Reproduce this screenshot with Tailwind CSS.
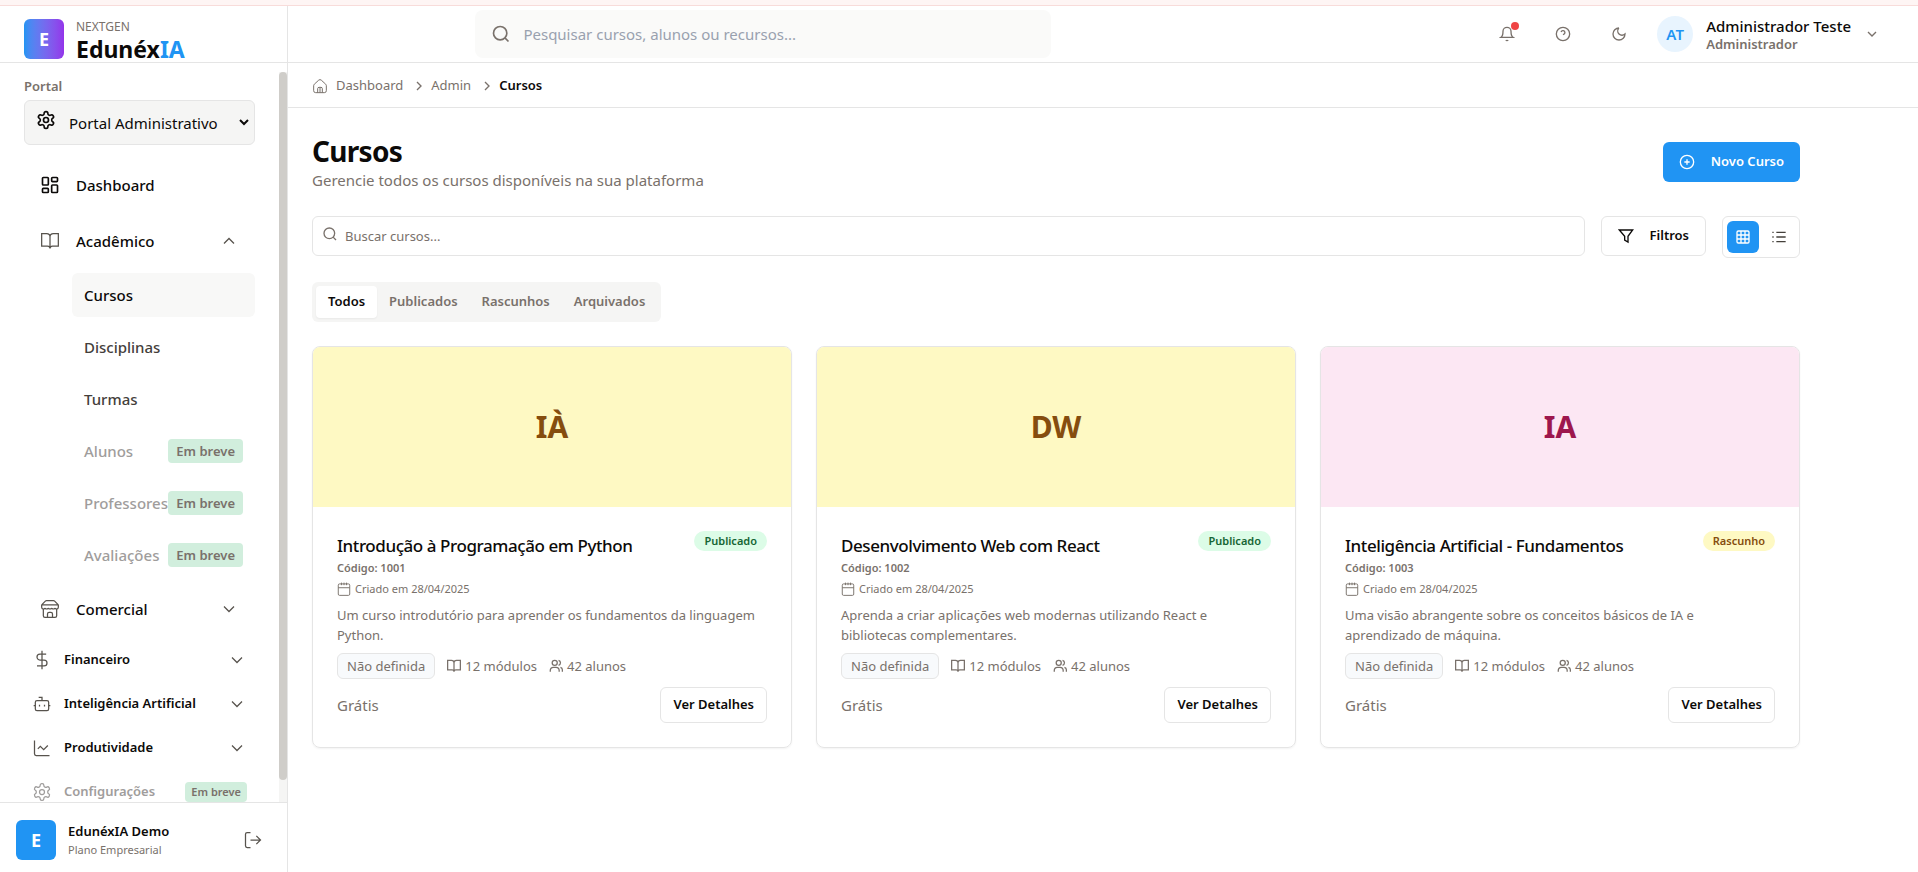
<!DOCTYPE html>
<html lang="pt-BR">
<head>
<meta charset="utf-8">
<meta name="viewport" content="width=device-width, initial-scale=1">
<title>Cursos - EdunéxIA</title>
<script src="https://cdn.jsdelivr.net/npm/@tailwindcss/browser@4"></script>
</head>
<body class="flex h-screen flex-col overflow-hidden bg-white font-['Noto_Sans','Open_Sans',sans-serif] text-stone-950">
<svg class="hidden" aria-hidden="true">
  <symbol id="gear" viewBox="0 0 24 24"><path d="M12.22 2h-.44a2 2 0 0 0-2 2v.18a2 2 0 0 1-1 1.73l-.43.25a2 2 0 0 1-2 0l-.15-.08a2 2 0 0 0-2.73.73l-.22.38a2 2 0 0 0 .73 2.73l.15.1a2 2 0 0 1 1 1.72v.51a2 2 0 0 1-1 1.74l-.15.09a2 2 0 0 0-.73 2.73l.22.38a2 2 0 0 0 2.73.73l.15-.08a2 2 0 0 1 2 0l.43.25a2 2 0 0 1 1 1.73V20a2 2 0 0 0 2 2h.44a2 2 0 0 0 2-2v-.18a2 2 0 0 1 1-1.73l.43-.25a2 2 0 0 1 2 0l.15.08a2 2 0 0 0 2.73-.73l.22-.39a2 2 0 0 0-.73-2.73l-.15-.08a2 2 0 0 1-1-1.74v-.5a2 2 0 0 1 1-1.74l.15-.09a2 2 0 0 0 .73-2.73l-.22-.38a2 2 0 0 0-2.73-.73l-.15.08a2 2 0 0 1-2 0l-.43-.25a2 2 0 0 1-1-1.73V4a2 2 0 0 0-2-2z"/><circle cx="12" cy="12" r="3"/></symbol>
  <symbol id="dash" viewBox="0 0 24 24"><rect x="3" y="3" width="7" height="9" rx="1"/><rect x="14" y="3" width="7" height="5" rx="1"/><rect x="14" y="12" width="7" height="9" rx="1"/><rect x="3" y="16" width="7" height="5" rx="1"/></symbol>
  <symbol id="book" viewBox="0 0 24 24"><path d="M2 3h6a4 4 0 0 1 4 4v14a3 3 0 0 0-3-3H2zM22 3h-6a4 4 0 0 0-4 4v14a3 3 0 0 1 3-3h7z"/></symbol>
  <symbol id="book-sm" viewBox="1 1 22 22"><path d="M2 3h6a4 4 0 0 1 4 4v14a3 3 0 0 0-3-3H2zM22 3h-6a4 4 0 0 0-4 4v14a3 3 0 0 1 3-3h7z"/></symbol>
  <symbol id="store" viewBox="0 0 24 24"><path d="m2 7 4.41-4.41A2 2 0 0 1 7.83 2h8.34a2 2 0 0 1 1.42.59L22 7M4 12v8a2 2 0 0 0 2 2h12a2 2 0 0 0 2-2v-8M15 22v-4a2 2 0 0 0-2-2h-2a2 2 0 0 0-2 2v4M2 7h20M22 7v3a2 2 0 0 1-2 2 2.7 2.7 0 0 1-1.59-.63.7.7 0 0 0-.82 0A2.7 2.7 0 0 1 16 12a2.7 2.7 0 0 1-1.59-.63.7.7 0 0 0-.82 0A2.7 2.7 0 0 1 12 12a2.7 2.7 0 0 1-1.59-.63.7.7 0 0 0-.82 0A2.7 2.7 0 0 1 8 12a2.7 2.7 0 0 1-1.59-.63.7.7 0 0 0-.82 0A2.7 2.7 0 0 1 4 12a2 2 0 0 1-2-2V7"/></symbol>
  <symbol id="dollar" viewBox="0 0 24 24"><path d="M12 1v22M17 5H9.5a3.5 3.5 0 0 0 0 7h5a3.5 3.5 0 0 1 0 7H6"/></symbol>
  <symbol id="bot" viewBox="0 0 24 24"><path d="M12 8V4H8M2 14h2M20 14h2M15 13v2M9 13v2"/><rect x="4" y="8" width="16" height="12" rx="2"/></symbol>
  <symbol id="chart" viewBox="0 0 24 24"><path d="M3 3v16a2 2 0 0 0 2 2h16M19 9l-5 5-4-4-3 3"/></symbol>
  <symbol id="down" viewBox="0 0 24 24"><path d="m6 9 6 6 6-6"/></symbol>
  <symbol id="up" viewBox="0 0 24 24"><path d="m18 15-6-6-6 6"/></symbol>
  <symbol id="right" viewBox="0 0 24 24"><path d="m9 18 6-6-6-6"/></symbol>
  <symbol id="logout" viewBox="0 0 24 24"><path d="M9 3H5a2 2 0 0 0-2 2v14a2 2 0 0 0 2 2h4M16 17l5-5-5-5M21 12H9"/></symbol>
  <symbol id="search" viewBox="0 0 24 24"><circle cx="11" cy="11" r="8"/><path d="m21 21-4.3-4.3"/></symbol>
  <symbol id="home" viewBox="0 0 24 24"><path d="M2.500 11.500a3 3 0 0 1 1-2.200l6.500-6a3 3 0 0 1 4 0l6.500 6a3 3 0 0 1 1 2.200V19a3 3 0 0 1-3 3h-13a3 3 0 0 1-3-3zM8.500 22v-6a2 2 0 0 1 2-2h3a2 2 0 0 1 2 2v6M12 14v8"/></symbol>
  <symbol id="bell" viewBox="0 0 24 24"><path d="M6 8a6 6 0 0 1 12 0c0 7 3 9 3 9H3s3-2 3-9M10.300 21a1.940 1.940 0 0 0 3.400 0"/></symbol>
  <symbol id="help" viewBox="0 0 24 24"><circle cx="12" cy="12" r="10"/><path d="M9.090 9a3 3 0 0 1 5.830 1c0 2-3 3-3 3M12 17h.01"/></symbol>
  <symbol id="moon" viewBox="0 0 24 24"><path d="M12 3a6 6 0 0 0 9 9 9 9 0 1 1-9-9"/></symbol>
  <symbol id="plus" viewBox="0 0 24 24"><circle cx="12" cy="12" r="10"/><path d="M8 12h8M12 8v8"/></symbol>
  <symbol id="filter" viewBox="0 0 24 24"><path d="M2 3h20l-7 9.500V21l-5-3v-5.500z"/></symbol>
  <symbol id="grid" viewBox="0 0 24 24"><rect x="3" y="3" width="18" height="18" rx="2"/><path d="M3 9h18M3 15h18M9 3v18M15 3v18"/></symbol>
  <symbol id="list" viewBox="0 0 24 24"><path d="M8 5h14M8 12h14M8 19h14M2 5h2M2 12h2M2 19h2"/></symbol>
  <symbol id="cal" viewBox="1 1 22 22"><rect x="3" y="4" width="18" height="18" rx="2"/><path d="M16 2v4M8 2v4M12 2v4M3 10h18"/></symbol>
  <symbol id="users" viewBox="1 1 22 22"><circle cx="10" cy="7" r="4"/><path d="M3 21v-2a5 5 0 0 1 5-5h4a5 5 0 0 1 5 5v2M22 21v-3a4 4 0 0 0-3-3.870M16 3.130a4 4 0 0 1 0 7.750"/></symbol>
</svg>

<div class="h-1.5 shrink-0 border-b border-[#f8dcda] bg-[#fef5f4]"></div>
<div class="flex min-h-0 flex-1">

  <aside class="flex w-72 shrink-0 flex-col border-r border-neutral-200">
    <div class="flex h-[57px] shrink-0 items-start gap-3 border-b border-neutral-200 px-6 pt-[13px]">
      <div class="flex size-10 shrink-0 items-center justify-center rounded-md bg-linear-to-r from-[#2094f3] to-[#9333ea] text-lg font-bold text-white">E</div>
      <div class="h-10">
        <div class="text-xs leading-4 text-stone-500">NEXTGEN</div>
        <div class="text-[23px] leading-7 font-bold">Edunéx<span class="text-[#2094f3]">IA</span></div>
      </div>
    </div>

    <div class="flex min-h-0 flex-1 overflow-hidden">
      <nav class="flex min-w-0 flex-1 flex-col px-6 pt-3">
        <label for="portal" class="text-[13px] leading-[22px] font-semibold text-stone-500">Portal</label>
        <div class="relative mt-[3px]">
          <svg class="pointer-events-none absolute top-2.5 left-3 size-5 fill-none stroke-current stroke-2"><use href="#gear"/></svg>
          <select id="portal" class="h-[45px] w-full appearance-none rounded-md border border-neutral-200 bg-stone-100 pt-0.5 pr-8 pl-11 text-[15px]">
            <option>Portal Administrativo</option>
          </select>
          <svg class="pointer-events-none absolute top-3.5 right-[3px] size-4 fill-none stroke-current stroke-3"><use href="#down"/></svg>
        </div>

        <div class="mt-4 flex shrink-0 flex-col gap-2">
          <a href="#" class="flex h-12 items-center gap-4 px-4 text-[15px] font-medium"><svg class="size-5 fill-none stroke-current stroke-2"><use href="#dash"/></svg>Dashboard</a>
          <button class="flex h-12 items-center gap-4 px-4 text-left text-[15px] font-medium"><svg class="size-5 fill-none stroke-stone-600 stroke-[1.5]"><use href="#book"/></svg><span class="flex-1">Acadêmico</span><svg class="size-5 fill-none stroke-stone-600 stroke-[1.5]"><use href="#up"/></svg></button>
          <div class="ml-12 flex flex-col gap-2 text-[15px] font-medium">
            <a href="#" class="flex h-11 items-center rounded-md bg-[#f8f8f7] px-3">Cursos</a>
            <a href="#" class="flex h-11 items-center px-3 text-stone-700">Disciplinas</a>
            <a href="#" class="flex h-11 items-center px-3 text-stone-700">Turmas</a>
            <a href="#" class="flex h-11 items-center justify-between px-3 text-[#9f9d9c]">Alunos<span class="rounded-sm bg-[#d1eedd] px-2 text-[13px] leading-6 font-semibold whitespace-nowrap text-stone-500">Em breve</span></a>
            <a href="#" class="flex h-11 items-center justify-between px-3 text-[#9f9d9c]">Professores<span class="rounded-sm bg-[#d1eedd] px-2 text-[13px] leading-6 font-semibold whitespace-nowrap text-stone-500">Em breve</span></a>
            <a href="#" class="flex h-11 items-center justify-between px-3 text-[#9f9d9c]">Avaliações<span class="rounded-sm bg-[#d1eedd] px-2 text-[13px] leading-6 font-semibold whitespace-nowrap text-stone-500">Em breve</span></a>
          </div>
          <button class="flex h-12 items-center gap-4 px-4 text-left text-[15px] font-medium"><svg class="size-5 fill-none stroke-stone-600 stroke-[1.5]"><use href="#store"/></svg><span class="flex-1">Comercial</span><svg class="size-5 fill-none stroke-stone-600 stroke-[1.5]"><use href="#down"/></svg></button>
        </div>
        <div class="mt-[5px] flex shrink-0 flex-col text-[13px] font-semibold">
          <button class="flex h-11 items-center gap-3 px-2 text-left"><svg class="size-5 fill-none stroke-stone-600 stroke-[1.5]"><use href="#dollar"/></svg><span class="flex-1">Financeiro</span><svg class="size-5 fill-none stroke-stone-600 stroke-[1.5]"><use href="#down"/></svg></button>
          <button class="flex h-11 items-center gap-3 px-2 text-left"><svg class="size-5 fill-none stroke-stone-600 stroke-[1.5]"><use href="#bot"/></svg><span class="flex-1">Inteligência Artificial</span><svg class="size-5 fill-none stroke-stone-600 stroke-[1.5]"><use href="#down"/></svg></button>
          <button class="flex h-11 items-center gap-3 px-2 text-left"><svg class="size-5 fill-none stroke-stone-600 stroke-[1.5]"><use href="#chart"/></svg><span class="flex-1">Produtividade</span><svg class="size-5 fill-none stroke-stone-600 stroke-[1.5]"><use href="#down"/></svg></button>
          <a href="#" class="flex h-11 items-center gap-3 px-2 text-[#9f9d9c]"><svg class="size-5 fill-none stroke-[#9f9d9c] stroke-[1.5]"><use href="#gear"/></svg><span class="flex-1">Configurações</span><span class="rounded-sm bg-[#d1eedd] px-1.5 text-[11px] leading-5 whitespace-nowrap text-stone-500">Em breve</span></a>
        </div>
      </nav>
      <div class="mt-[9px] w-2 shrink-0 bg-stone-100"><div class="h-[97%] rounded-full bg-[#cfcdc9]"></div></div>
    </div>

    <div class="flex h-[70px] shrink-0 items-center gap-3 border-t border-neutral-200 px-4 pt-1">
      <div class="flex size-10 items-center justify-center rounded-md bg-[#2094f3] text-lg font-bold text-white">E</div>
      <div class="flex-1">
        <div class="text-[13px] leading-5 font-semibold">EdunéxIA Demo</div>
        <div class="text-[11px] leading-[18px] text-stone-500">Plano Empresarial</div>
      </div>
      <button aria-label="Sair" class="flex size-9 items-center justify-center"><svg class="size-5 fill-none stroke-stone-600 stroke-[1.5]"><use href="#logout"/></svg></button>
    </div>
  </aside>

  <div class="flex min-w-0 flex-1 flex-col">
    <header class="flex h-[57px] shrink-0 items-center border-b border-neutral-200 px-6">
      <div class="flex-[3]"></div>
      <div class="flex h-12 w-xl items-center gap-3 rounded-lg bg-[#fafaf9] px-4">
        <svg class="size-5 fill-none stroke-stone-500 stroke-2"><use href="#search"/></svg>
        <input type="search" aria-label="Pesquisar" placeholder="Pesquisar cursos, alunos ou recursos..." class="flex-1 bg-transparent text-[15px] outline-none placeholder:text-gray-400">
      </div>
      <div class="flex-[8]"></div>
      <div class="flex items-center gap-4 text-stone-500">
        <button aria-label="Notificações" class="relative flex size-10 items-center justify-center"><svg class="size-4 fill-none stroke-current stroke-2"><use href="#bell"/></svg><span class="absolute top-2 right-2 size-2 rounded-full bg-[#ef4444]"></span></button>
        <button aria-label="Ajuda" class="flex size-10 items-center justify-center"><svg class="size-4 fill-none stroke-current stroke-2"><use href="#help"/></svg></button>
        <button aria-label="Tema" class="flex size-10 items-center justify-center"><svg class="size-4 fill-none stroke-current stroke-2"><use href="#moon"/></svg></button>
        <button class="flex items-center gap-[13px] pr-3.5 pl-0.5 text-left">
          <span class="flex size-9 items-center justify-center rounded-full bg-[#e8f4fe] text-[15px] font-semibold text-[#2094f3]">AT</span>
          <span><span class="block text-[15px] leading-5 font-medium text-stone-950">Administrador Teste</span><span class="block text-[13px] leading-4 font-semibold">Administrador</span></span>
          <svg class="size-4 fill-none stroke-current stroke-2"><use href="#down"/></svg>
        </button>
      </div>
    </header>

    <nav aria-label="Trilha" class="flex h-[45px] shrink-0 items-center border-b border-neutral-200 px-6 pt-0.5 text-[13px] text-stone-500">
      <svg class="mr-2 size-4 fill-none stroke-current stroke-[1.5]"><use href="#home"/></svg>
      <a href="#">Dashboard</a>
      <svg class="mr-1 ml-2 size-4 fill-none stroke-current stroke-2"><use href="#right"/></svg>
      <a href="#">Admin</a>
      <svg class="mr-1 ml-2 size-4 fill-none stroke-current stroke-2"><use href="#right"/></svg>
      <span class="font-semibold text-stone-950">Cursos</span>
    </nav>

    <main class="flex w-full max-w-[1536px] flex-col gap-6 p-6">
      <div class="flex items-center justify-between">
        <div class="pb-0.5">
          <h1 class="text-[28px] leading-[38px] font-bold tracking-tight">Cursos</h1>
          <p class="text-[15px] leading-5 text-stone-500">Gerencie todos os cursos disponíveis na sua plataforma</p>
        </div>
        <button class="flex h-10 items-center gap-4 rounded-md bg-[#2094f3] px-4 text-[13px] font-semibold text-white"><svg class="size-4 fill-none stroke-current stroke-2"><use href="#plus"/></svg>Novo Curso</button>
      </div>

      <div class="flex items-start gap-4">
        <div class="relative flex-1">
          <svg class="absolute top-2.5 left-2.5 size-4 fill-none stroke-stone-500 stroke-2"><use href="#search"/></svg>
          <input type="search" aria-label="Buscar cursos" placeholder="Buscar cursos..." class="block h-10 w-full rounded-md border border-neutral-200 pr-3 pl-8 text-[13px] placeholder:text-stone-500">
        </div>
        <button class="flex h-10 items-center gap-4 rounded-md border border-neutral-200 px-4 text-[13px] font-semibold"><svg class="size-4 fill-none stroke-current stroke-2"><use href="#filter"/></svg>Filtros</button>
        <div class="flex gap-1 rounded-md border border-neutral-200 p-1">
          <button aria-label="Grade" class="flex size-8 items-center justify-center rounded-md bg-[#2094f3] text-white"><svg class="size-4 fill-none stroke-current stroke-2"><use href="#grid"/></svg></button>
          <button aria-label="Lista" class="flex size-8 items-center justify-center text-stone-700"><svg class="size-4 fill-none stroke-current stroke-2"><use href="#list"/></svg></button>
        </div>
      </div>

      <div role="tablist" class="flex h-10 self-start rounded-md bg-stone-100 p-1 text-[13px] font-semibold text-stone-500">
        <button role="tab" aria-selected="true" class="rounded-sm bg-white px-3 text-stone-950 shadow-xs">Todos</button>
        <button role="tab" class="px-3">Publicados</button>
        <button role="tab" class="px-3">Rascunhos</button>
        <button role="tab" class="px-3">Arquivados</button>
      </div>

      <div class="grid grid-cols-3 gap-6">
        <article class="overflow-hidden rounded-lg border border-neutral-200 shadow-xs">
          <div class="flex h-40 items-center justify-center bg-[#fef9c3] text-3xl font-bold text-[#854d0e]">IÀ</div>
          <div class="p-6">
            <div class="flex items-start justify-between">
              <h2 class="text-[17px] leading-[30px] font-medium tracking-tight">Introdução à Programação em Python</h2>
              <span class="rounded-full bg-[#dcfce7] px-2.5 text-[11px] leading-5 font-semibold text-[#166534]">Publicado</span>
            </div>
            <p class="text-[11px] leading-[14px] font-semibold text-stone-500">Código: 1001</p>
            <p class="mt-1.5 flex items-center gap-1 text-[11px] leading-4 text-stone-500"><svg class="size-3.5 fill-none stroke-current stroke-[1.5]"><use href="#cal"/></svg>Criado em 28/04/2025</p>
            <p class="mt-2 h-10 pr-2 text-[13px] leading-5 text-stone-500">Um curso introdutório para aprender os fundamentos da linguagem Python.</p>
            <div class="mt-2 flex items-center gap-3 text-[13px] leading-6 text-stone-500">
              <span class="rounded-md border border-neutral-200 bg-slate-50 px-[9px]">Não definida</span>
              <span class="flex items-center gap-1"><svg class="size-3.5 fill-none stroke-current stroke-2"><use href="#book-sm"/></svg>12 módulos</span>
              <span class="flex items-center gap-1"><svg class="size-3.5 fill-none stroke-current stroke-2"><use href="#users"/></svg>42 alunos</span>
            </div>
            <div class="mt-2 flex items-center justify-between text-stone-500">
              <span class="text-[15px]">Grátis</span>
              <button class="h-9 rounded-md border border-neutral-200 px-3 text-[13px] font-semibold text-stone-950">Ver Detalhes</button>
            </div>
          </div>
        </article>

        <article class="overflow-hidden rounded-lg border border-neutral-200 shadow-xs">
          <div class="flex h-40 items-center justify-center bg-[#fef9c3] text-3xl font-bold text-[#854d0e]">DW</div>
          <div class="p-6">
            <div class="flex items-start justify-between">
              <h2 class="text-[17px] leading-[30px] font-medium tracking-tight">Desenvolvimento Web com React</h2>
              <span class="rounded-full bg-[#dcfce7] px-2.5 text-[11px] leading-5 font-semibold text-[#166534]">Publicado</span>
            </div>
            <p class="text-[11px] leading-[14px] font-semibold text-stone-500">Código: 1002</p>
            <p class="mt-1.5 flex items-center gap-1 text-[11px] leading-4 text-stone-500"><svg class="size-3.5 fill-none stroke-current stroke-[1.5]"><use href="#cal"/></svg>Criado em 28/04/2025</p>
            <p class="mt-2 h-10 pr-2 text-[13px] leading-5 text-stone-500">Aprenda a criar aplicações web modernas utilizando React e bibliotecas complementares.</p>
            <div class="mt-2 flex items-center gap-3 text-[13px] leading-6 text-stone-500">
              <span class="rounded-md border border-neutral-200 bg-slate-50 px-[9px]">Não definida</span>
              <span class="flex items-center gap-1"><svg class="size-3.5 fill-none stroke-current stroke-2"><use href="#book-sm"/></svg>12 módulos</span>
              <span class="flex items-center gap-1"><svg class="size-3.5 fill-none stroke-current stroke-2"><use href="#users"/></svg>42 alunos</span>
            </div>
            <div class="mt-2 flex items-center justify-between text-stone-500">
              <span class="text-[15px]">Grátis</span>
              <button class="h-9 rounded-md border border-neutral-200 px-3 text-[13px] font-semibold text-stone-950">Ver Detalhes</button>
            </div>
          </div>
        </article>

        <article class="overflow-hidden rounded-lg border border-neutral-200 shadow-xs">
          <div class="flex h-40 items-center justify-center bg-[#fce7f3] text-3xl font-bold text-[#9d174d]">IA</div>
          <div class="p-6">
            <div class="flex items-start justify-between">
              <h2 class="text-[17px] leading-[30px] font-medium tracking-tight">Inteligência Artificial - Fundamentos</h2>
              <span class="rounded-full bg-[#fef9c3] px-2.5 text-[11px] leading-5 font-semibold text-[#854d0e]">Rascunho</span>
            </div>
            <p class="text-[11px] leading-[14px] font-semibold text-stone-500">Código: 1003</p>
            <p class="mt-1.5 flex items-center gap-1 text-[11px] leading-4 text-stone-500"><svg class="size-3.5 fill-none stroke-current stroke-[1.5]"><use href="#cal"/></svg>Criado em 28/04/2025</p>
            <p class="mt-2 h-10 pr-2 text-[13px] leading-5 text-stone-500">Uma visão abrangente sobre os conceitos básicos de IA e aprendizado de máquina.</p>
            <div class="mt-2 flex items-center gap-3 text-[13px] leading-6 text-stone-500">
              <span class="rounded-md border border-neutral-200 bg-slate-50 px-[9px]">Não definida</span>
              <span class="flex items-center gap-1"><svg class="size-3.5 fill-none stroke-current stroke-2"><use href="#book-sm"/></svg>12 módulos</span>
              <span class="flex items-center gap-1"><svg class="size-3.5 fill-none stroke-current stroke-2"><use href="#users"/></svg>42 alunos</span>
            </div>
            <div class="mt-2 flex items-center justify-between text-stone-500">
              <span class="text-[15px]">Grátis</span>
              <button class="h-9 rounded-md border border-neutral-200 px-3 text-[13px] font-semibold text-stone-950">Ver Detalhes</button>
            </div>
          </div>
        </article>
      </div>
    </main>
  </div>
</div>
</body>
</html>
